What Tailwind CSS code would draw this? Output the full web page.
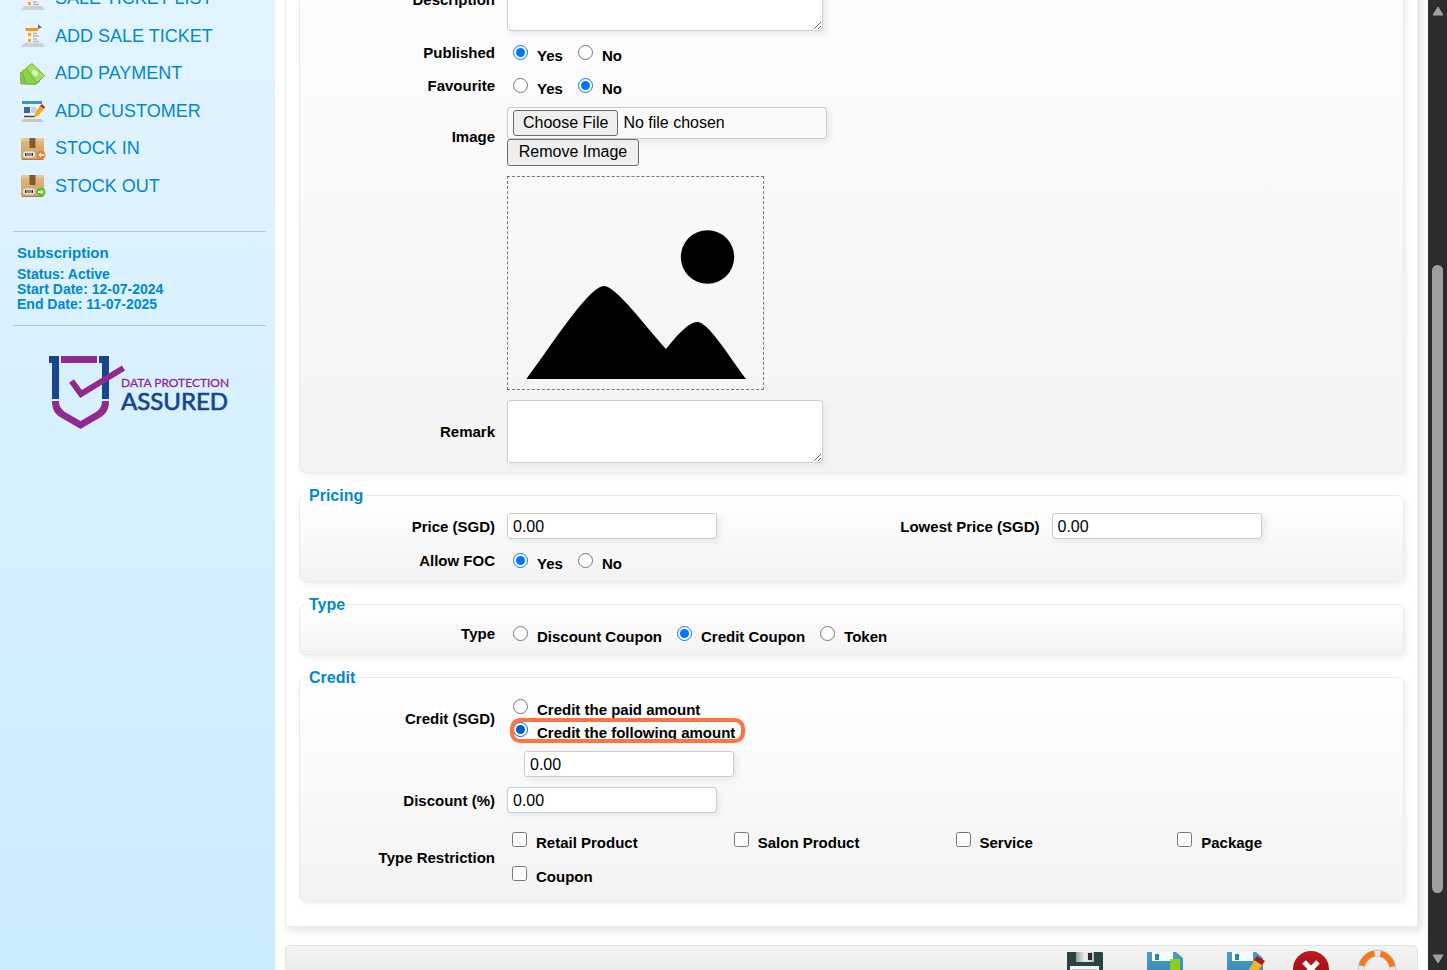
<!DOCTYPE html>
<html lang="en">
  <head>
    <meta charset="UTF-8" />
    <meta name="viewport" content="width=device-width, initial-scale=1.0" />
    <title>Add Coupon</title>
    <script src="https://cdn.jsdelivr.net/npm/@tailwindcss/browser@4"></script>
  </head>
  <body
    class="flex h-screen overflow-hidden bg-white font-['Liberation_Sans',Arial,sans-serif] text-[15px] text-black"
  >
    <!-- Shared icon shapes -->
    <svg class="absolute size-0">
      <defs>
        <linearGradient id="box-fill" x1="0" y1="0" x2="0" y2="1">
          <stop offset="0" stop-color="#dcb882" />
          <stop offset="1" stop-color="#cfa467" />
        </linearGradient>
        <linearGradient id="disk-blue" x1="0" y1="0" x2="0" y2="1">
          <stop offset="0" stop-color="#4b9cc9" />
          <stop offset="1" stop-color="#2f7fae" />
        </linearGradient>
        <linearGradient id="disk-shutter" x1="0" y1="0" x2="1" y2="0">
          <stop offset="0" stop-color="#9b9b9b" />
          <stop offset="0.500" stop-color="#f0f0f0" />
          <stop offset="1" stop-color="#bdbdbd" />
        </linearGradient>
        <linearGradient id="cancel-red" x1="0" y1="0" x2="0" y2="1">
          <stop offset="0" stop-color="#c01a1f" />
          <stop offset="1" stop-color="#8f0a10" />
        </linearGradient>
        <symbol id="icon-ticket" viewBox="0 0 26 26">
          <path d="M5 4h16l1 18H4z" fill="#eef1f3" />
          <path d="M1 24l3-4h18l3 4z" fill="#ccd1d5" />
          <path d="M5 5h15l-3 3H6z" fill="#f39a1c" />
          <path d="M18 1l4 4h-4z" fill="#5c6670" />
          <path d="M8 10h3v3H8zM8 16h3v3H8z" fill="#f5a623" />
          <path
            d="M13 10.500h4M13 13h6M13 16h4M13 18.500h6"
            stroke="#a9bccb"
            stroke-width="1.300"
          />
        </symbol>
        <symbol id="icon-box" viewBox="0 0 26 26">
          <rect x="1" y="2" width="23" height="22" rx="2" fill="url(#box-fill)" />
          <path d="M3 2h19l2 3H1z" fill="#e6c797" />
          <path d="M9.500 2h6v10h-6z" fill="#86592c" />
          <rect x="3" y="15.500" width="12" height="6" rx="3" fill="#e8e5e0" />
          <path d="M5.500 17v3M7 17v3M9 17v3M11 17v3M12.500 17v3" stroke="#333" />
          <path d="M2 23.500h21" stroke="#a87d48" />
        </symbol>
      </defs>
    </svg>

    <!-- Sidebar -->
    <aside
      class="w-[275px] shrink-0 bg-linear-to-b from-[#e2f4fe] to-[#caecff] px-[13px] text-[#0088cf]"
    >
      <nav class="-mt-5 flex h-[225px] flex-col pl-[7px] text-[18px]">
        <a href="#" class="flex flex-1 items-center gap-[9px]">
          <svg class="size-[26px]"><use href="#icon-ticket" /></svg>
          SALE TICKET LIST
        </a>
        <a href="#" class="flex flex-1 items-center gap-[9px]">
          <svg class="size-[26px]"><use href="#icon-ticket" /></svg>
          ADD SALE TICKET
        </a>
        <a href="#" class="flex flex-1 items-center gap-[9px]">
          <svg class="size-[26px]" viewBox="0 0 26 26">
            <path
              d="M0 12l4-2 12 13H1z"
              fill="#86c94b"
              stroke="#6eb536"
              stroke-linejoin="round"
            />
            <path
              d="M2 10l6-3 12 13-4 3H6z"
              fill="#8fd24e"
              stroke="#6eb536"
              stroke-linejoin="round"
            />
            <path
              d="M6 7l6-4.500 12.500 12L17 22z"
              fill="#a2e05e"
              stroke="#6eb536"
              stroke-linejoin="round"
            />
            <ellipse
              cx="15"
              cy="12"
              rx="2.300"
              ry="3.500"
              transform="rotate(-40 15 12)"
              fill="#e3f8cb"
            />
          </svg>
          ADD PAYMENT
        </a>
        <a href="#" class="flex flex-1 items-center gap-[9px]">
          <svg class="size-[26px]" viewBox="0 0 26 26">
            <path d="M2 3h20v18H2z" fill="#eef1f3" />
            <path d="M1 24l2-3h18l3 3z" fill="#c3c8cc" />
            <path d="M2 3h20v3H2z" fill="#3d96c4" />
            <path d="M4 9h6v6H4z" fill="#2f6f9c" />
            <path d="M11 10h5M11 12h6M11 14h4" stroke="#9fb3c2" />
            <path d="M4 18.500h11" stroke="#444" stroke-width="1.500" />
            <path d="M20 8l4 3-6 7-4 1 1-4z" fill="#f5a623" />
            <path d="M20 8l2-2 3 3-1 2z" fill="#c8202f" />
          </svg>
          ADD CUSTOMER
        </a>
        <a href="#" class="flex flex-1 items-center gap-[9px]">
          <svg class="size-[26px]" viewBox="0 0 26 26">
            <use href="#icon-box" />
            <circle cx="21" cy="19" r="4.500" fill="#f47a2a" />
            <path d="M18 19l3-2.500v1.500h3v2h-3v1.500z" fill="#fff" />
          </svg>
          STOCK IN
        </a>
        <a href="#" class="flex flex-1 items-center gap-[9px]">
          <svg class="size-[26px]" viewBox="0 0 26 26">
            <use href="#icon-box" />
            <circle cx="21" cy="19" r="4.500" fill="#58c322" />
            <path d="M24 19l-3-2.500v1.500h-3v2h3v1.500z" fill="#fff" />
          </svg>
          STOCK OUT
        </a>
      </nav>

      <section
        class="mt-[26px] w-[253px] border-y border-[#9fcbe0] px-1 pt-3 pb-[13px] font-bold"
      >
        <h2 class="leading-[18px]">Subscription</h2>
        <p class="mt-[5px] text-[14px] leading-[15px]">
          Status: Active<br />Start Date: 12-07-2024<br />End Date: 11-07-2025
        </p>
      </section>

      <svg
        class="mt-[29px] ml-[35px] h-[76px] w-[182px]"
        viewBox="0 0 182 76"
        role="img"
        aria-label="Data Protection Assured"
      >
        <path d="M1 1h10v43H4V8H1zM51 1h10v43h-7V8h-3z" fill="#17468f" />
        <path d="M13 1h36v7H13z" fill="#912a8e" />
        <path
          d="M4 46h7c0 5 2 8 6 11l15.500 9L48 57c4-3 6-6 6-11h7c0 8-3 13-8 16l-20.500 12L12 62c-5-3-8-8-8-16z"
          fill="#912a8e"
        />
        <path d="M23.500 26l9.500 13L75.500 13" fill="none" stroke="#912a8e" stroke-width="6" />
        <text
          x="73"
          y="32"
          class="font-['Lato',sans-serif] text-[12px]"
          fill="#912a8e"
          stroke="#912a8e"
          stroke-width="0.300"
        >
          DATA PROTECTION
        </text>
        <text
          x="73"
          y="55"
          class="font-['Lato',sans-serif] text-[24px]"
          fill="#17468f"
          stroke="#17468f"
          stroke-width="0.700"
        >
          ASSURED
        </text>
      </svg>
    </aside>

    <main class="min-w-0 flex-1 px-[10px]">
      <form>
        <div
          class="-mt-[120px] flex flex-col gap-3 border border-[#ebebeb] bg-white px-[13px] pt-[22px] pb-[25px] shadow-[4px_4px_8px_#e4e4e4]"
        >
          <!-- General details -->
          <fieldset
            class="rounded-md border border-[#ebebeb] bg-linear-to-b from-white to-[#f3f3f3] pt-[59px] pr-2 pb-1 pl-[6px] shadow-[3px_3px_6px_#eef1f1]"
          >
            <div class="flex items-center gap-3 py-[5px]">
              <label for="description" class="w-[189px] pt-0.5 text-right font-bold">Description</label>
              <textarea
                id="description"
                class="block h-[63px] w-[316px] rounded-[3px] border border-[#ccc] bg-white shadow-[3px_3px_6px_#e6e9e9]"
              ></textarea>
            </div>
            <div class="flex items-center gap-3">
              <span id="published-label" class="w-[189px] pt-0.5 text-right font-bold">Published</span>
              <div
                role="radiogroup"
                aria-labelledby="published-label"
                class="flex gap-[15px] pt-[9px] pb-0.5 pl-[6px] leading-[22px] font-bold"
              >
                <label class="flex gap-[9px]"><input type="radio" name="published" checked class="size-[15px]" />Yes</label>
                <label class="flex gap-[9px]"><input type="radio" name="published" class="size-[15px]" />No</label>
              </div>
            </div>
            <div class="flex items-center gap-3">
              <span id="favourite-label" class="w-[189px] pt-0.5 text-right font-bold">Favourite</span>
              <div
                role="radiogroup"
                aria-labelledby="favourite-label"
                class="flex gap-[15px] pt-[9px] pb-0.5 pl-[6px] leading-[22px] font-bold"
              >
                <label class="flex gap-[9px]"><input type="radio" name="favourite" class="size-[15px]" />Yes</label>
                <label class="flex gap-[9px]"><input type="radio" name="favourite" checked class="size-[15px]" />No</label>
              </div>
            </div>
            <div class="flex items-center gap-3 py-[5px]">
              <label for="image" class="w-[189px] pt-0.5 text-right font-bold">Image</label>
              <div>
                <input
                  type="file"
                  id="image"
                  class="block h-8 w-[320px] rounded-[3px] border border-[#ccc] px-[5px] py-[2px] text-[16px] leading-6 shadow-[3px_3px_6px_#e6e9e9] file:mr-[5px] file:h-[26px] file:rounded-[3px] file:border file:border-solid file:border-[#6b6b6b] file:bg-[#efefef] file:px-[9px] file:text-black"
                />
                <button
                  type="button"
                  class="block h-[27px] w-[132px] rounded-[3px] border border-[#6b6b6b] bg-[#efefef] pb-0.5 text-[16px] leading-[22px]"
                >
                  Remove Image
                </button>
              </div>
            </div>
            <div class="py-[5px] pl-[201px]">
              <svg
                class="block h-[214px] w-[257px] border border-dashed border-[#777]"
                viewBox="1 1 255 212"
                role="img"
                aria-label="Image preview"
              >
                <circle cx="200.500" cy="81" r="26.700" />
                <path
                  d="M19.500 203C44 170 82 110 97 110c12 0 42 41 62 63 9-11 22-27 31-27 11 0 29 30 49 57z"
                />
              </svg>
            </div>
            <div class="flex items-center gap-3 py-[5px]">
              <label for="remark" class="w-[189px] pt-0.5 text-right font-bold">Remark</label>
              <textarea
                id="remark"
                class="block h-[63px] w-[316px] rounded-[3px] border border-[#ccc] bg-white shadow-[3px_3px_6px_#e6e9e9]"
              ></textarea>
            </div>
          </fieldset>

          <!-- Pricing -->
          <fieldset
            class="rounded-md border border-[#ebebeb] bg-linear-to-b from-white to-[#f3f3f3] pt-[3px] pr-2 pb-1 pl-[6px] shadow-[3px_3px_6px_#eef1f1]"
          >
            <legend class="px-[3px] pt-0.5 text-[16px] leading-[18px] font-bold text-[#0088cf]">Pricing</legend>
            <div class="grid grid-cols-2">
              <div class="flex items-center gap-3 py-[5px]">
                <label for="price" class="w-[189px] pt-0.5 text-right font-bold">Price (SGD)</label>
                <input
                  type="text"
                  id="price"
                  value="0.00"
                  class="h-[26px] w-[210px] rounded-[3px] border border-[#ccc] bg-white px-[5px] pt-0.5 text-[16px] shadow-[3px_3px_6px_#e6e9e9]"
                />
              </div>
              <div class="flex items-center gap-3 py-[5px]">
                <label for="lowest-price" class="w-[189px] pt-0.5 text-right font-bold">Lowest Price (SGD)</label>
                <input
                  type="text"
                  id="lowest-price"
                  value="0.00"
                  class="h-[26px] w-[210px] rounded-[3px] border border-[#ccc] bg-white px-[5px] pt-0.5 text-[16px] shadow-[3px_3px_6px_#e6e9e9]"
                />
              </div>
            </div>
            <div class="flex items-center gap-3">
              <span id="foc-label" class="w-[189px] pt-0.5 text-right font-bold">Allow FOC</span>
              <div
                role="radiogroup"
                aria-labelledby="foc-label"
                class="flex gap-[15px] pt-[9px] pb-0.5 pl-[6px] leading-[22px] font-bold"
              >
                <label class="flex gap-[9px]"><input type="radio" name="foc" checked class="size-[15px]" />Yes</label>
                <label class="flex gap-[9px]"><input type="radio" name="foc" class="size-[15px]" />No</label>
              </div>
            </div>
          </fieldset>

          <!-- Type -->
          <fieldset
            class="rounded-md border border-[#ebebeb] bg-linear-to-b from-white to-[#f3f3f3] pt-[3px] pr-2 pb-1 pl-[6px] shadow-[3px_3px_6px_#eef1f1]"
          >
            <legend class="px-[3px] pt-0.5 text-[16px] leading-[18px] font-bold text-[#0088cf]">Type</legend>
            <div class="flex items-center gap-3">
              <span id="type-label" class="w-[189px] pt-0.5 text-right font-bold">Type</span>
              <div
                role="radiogroup"
                aria-labelledby="type-label"
                class="flex gap-[15px] pt-[9px] pb-0.5 pl-[6px] leading-[22px] font-bold"
              >
                <label class="flex gap-[9px]"><input type="radio" name="type" class="size-[15px]" />Discount Coupon</label>
                <label class="flex gap-[9px]"><input type="radio" name="type" checked class="size-[15px]" />Credit Coupon</label>
                <label class="flex gap-[9px]"><input type="radio" name="type" class="size-[15px]" />Token</label>
              </div>
            </div>
          </fieldset>

          <!-- Credit -->
          <fieldset
            class="rounded-md border border-[#ebebeb] bg-linear-to-b from-white to-[#f3f3f3] pt-[3px] pr-2 pb-1 pl-[6px] shadow-[3px_3px_6px_#eef1f1]"
          >
            <legend class="px-[3px] pt-0.5 text-[16px] leading-[18px] font-bold text-[#0088cf]">Credit</legend>
            <div class="flex h-14 items-center gap-3">
              <span id="credit-label" class="w-[189px] pt-0.5 text-right font-bold">Credit (SGD)</span>
              <div
                role="radiogroup"
                aria-labelledby="credit-label"
                class="flex flex-col items-start gap-px pt-[9px] pb-0.5 pl-[6px] leading-[22px] font-bold"
              >
                <label class="flex gap-[9px]"><input type="radio" name="credit" class="size-[15px]" />Credit the paid amount</label>
                <label class="relative flex gap-[9px]">
                  <input type="radio" name="credit" checked class="size-[15px] accent-[#005cc8]" />Credit the following amount
                  <span class="absolute -top-1 -right-[10px] -left-[3px] h-[25px] rounded-[10px] border-4 border-[#ff7442]"></span>
                </label>
              </div>
            </div>
            <div class="py-[5px] pl-[218px]">
              <input
                type="text"
                aria-label="Credit amount"
                value="0.00"
                class="block h-[26px] w-[210px] rounded-[3px] border border-[#ccc] bg-white px-[5px] pt-0.5 text-[16px] shadow-[3px_3px_6px_#e6e9e9]"
              />
            </div>
            <div class="flex items-center gap-3 py-[5px]">
              <label for="discount" class="w-[189px] pt-0.5 text-right font-bold">Discount (%)</label>
              <input
                type="text"
                id="discount"
                value="0.00"
                class="h-[26px] w-[210px] rounded-[3px] border border-[#ccc] bg-white px-[5px] pt-0.5 text-[16px] shadow-[3px_3px_6px_#e6e9e9]"
              />
            </div>
            <div class="flex items-center gap-3">
              <span id="restriction-label" class="w-[189px] pt-0.5 text-right font-bold">Type Restriction</span>
              <div
                role="group"
                aria-labelledby="restriction-label"
                class="-mr-1 grid flex-1 grid-cols-4 gap-y-3 pt-[14px] pb-2 pl-[5px] leading-[22px] font-bold"
              >
                <label class="flex gap-[9px]"><input type="checkbox" class="size-[15px]" />Retail Product</label>
                <label class="flex gap-[9px]"><input type="checkbox" class="size-[15px]" />Salon Product</label>
                <label class="flex gap-[9px]"><input type="checkbox" class="size-[15px]" />Service</label>
                <label class="flex gap-[9px]"><input type="checkbox" class="size-[15px]" />Package</label>
                <label class="flex gap-[9px]"><input type="checkbox" class="size-[15px]" />Coupon</label>
              </div>
            </div>
          </fieldset>
        </div>

        <!-- Action toolbar -->
        <div
          class="mt-[18px] flex justify-end gap-[26px] rounded-[5px] border border-[#e3e3e3] bg-linear-to-b from-[#f4f4f4] to-[#dedede] pt-[3px] pr-5 pb-5"
        >
          <button type="button" aria-label="Save" class="mr-[14px]">
            <svg class="size-10" viewBox="0 0 40 40">
              <path d="M2 3h35l1 1v34H2z" fill="#2b4244" />
              <path d="M11 3h18v10H11z" fill="url(#disk-shutter)" />
              <path d="M23 4h4v7h-4z" fill="#2a2a2a" />
              <path d="M5 17h29v20H5z" fill="#f5f5f5" />
              <path d="M7 20.500h25" stroke="#bbb" />
            </svg>
          </button>
          <button type="button" aria-label="Save and new" class="mr-[14px]">
            <svg class="size-10" viewBox="0 0 40 40">
              <path d="M2 3h29l7 6v29H2z" fill="url(#disk-blue)" />
              <path d="M7 3h21v9H7z" fill="#f5fafc" />
              <path d="M10 5h4v6h-4z" fill="#2b82ad" />
              <path d="M25 10h10v28H25z" fill="#8bd119" />
            </svg>
          </button>
          <button type="button" aria-label="Save and edit">
            <svg class="size-10" viewBox="0 0 40 40">
              <path d="M2 3h29l7 6v29H2z" fill="url(#disk-blue)" />
              <path d="M7 3h21v9H7z" fill="#f5fafc" />
              <path d="M10 5h4v6h-4z" fill="#2b82ad" />
              <path d="M30 10l8 5-16 22-6-2z" fill="#f0b429" />
              <path d="M32 7l8 5-3 4-8-5z" fill="#b3151f" />
            </svg>
          </button>
          <button type="button" aria-label="Cancel">
            <svg class="size-10" viewBox="0 0 40 40">
              <circle cx="20" cy="20" r="18" fill="url(#cancel-red)" />
              <path d="M13 13l14 14M27 13L13 27" stroke="#fff" stroke-width="5" />
            </svg>
          </button>
          <button type="button" aria-label="Help">
            <svg class="size-10" viewBox="0 0 40 40">
              <circle cx="20" cy="20" r="18.500" fill="none" stroke="#c9c9c9" stroke-width="1.500" />
              <circle cx="20" cy="20" r="15.500" fill="none" stroke="#f37a21" stroke-width="6" />
              <circle
                cx="20"
                cy="20"
                r="15.500"
                fill="none"
                stroke="#dbe9f8"
                stroke-width="6"
                stroke-dasharray="6 18.350"
                stroke-dashoffset="3"
              />
            </svg>
          </button>
        </div>
      </form>
    </main>

    <!-- Scrollbar -->
    <div class="flex w-[19px] shrink-0 flex-col items-center bg-[#2c2c2c] py-[5px]">
      <svg class="size-3" viewBox="0 0 12 12">
        <path d="M6 2l5 8H1z" fill="#9f9f9f" stroke="#9f9f9f" stroke-linejoin="round" />
      </svg>
      <div class="grow-[248]"></div>
      <div class="w-[11px] grow-[628] rounded-full bg-[#9f9f9f]"></div>
      <div class="grow-[60]"></div>
      <svg class="size-3" viewBox="0 0 12 12">
        <path d="M6 10l5-8H1z" fill="#9f9f9f" stroke="#9f9f9f" stroke-linejoin="round" />
      </svg>
    </div>
  </body>
</html>
